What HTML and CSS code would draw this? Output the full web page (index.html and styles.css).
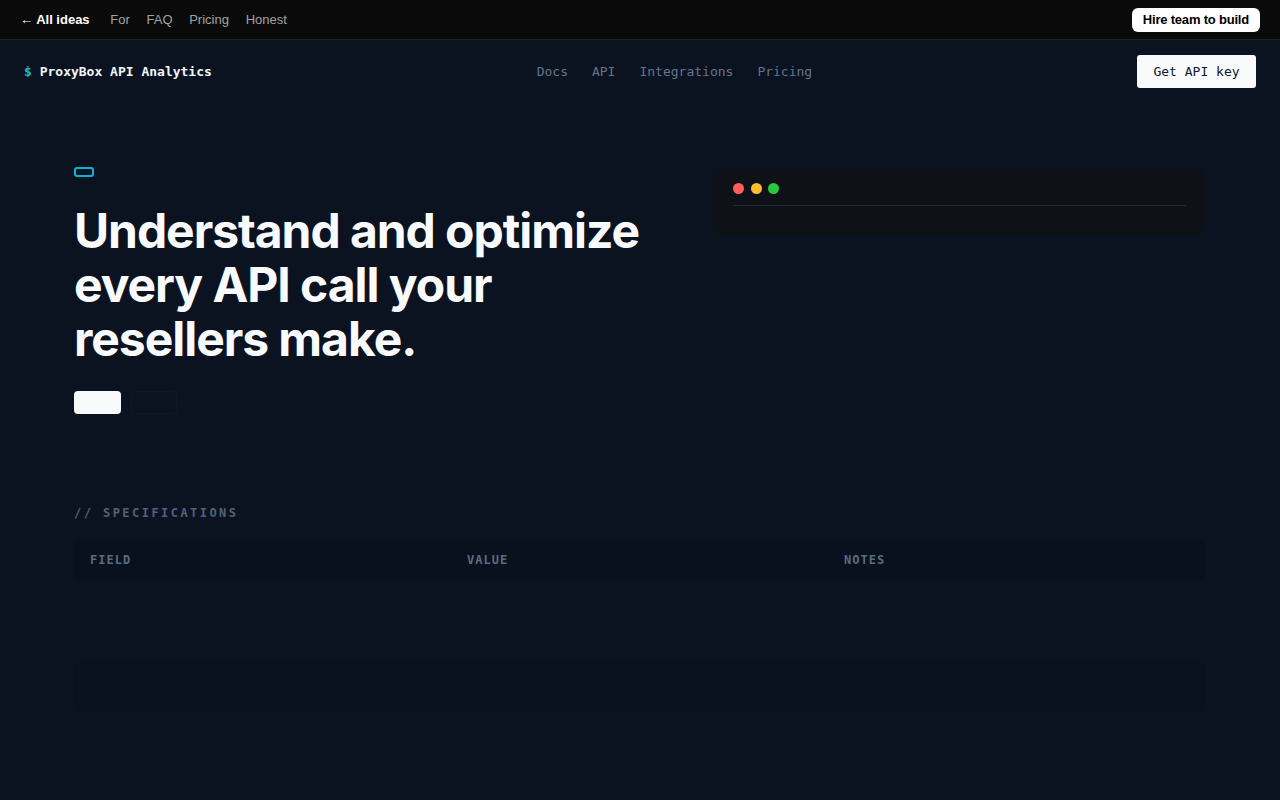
FILE: index.html
```html
<!DOCTYPE html>
<html lang="en">
<head>
  <meta charset="UTF-8">
  <meta name="viewport" content="width=device-width, initial-scale=1.0">
  <title>ProxyBox API Analytics</title>
  <link rel="stylesheet" href="styles.css">
</head>
<body>
  <!-- верхня панель -->
  <div class="topbar">
    <div class="topbar-left">
      <a class="back" href="#">&larr; All ideas</a>
      <a href="#">For</a>
      <a href="#">FAQ</a>
      <a href="#">Pricing</a>
      <a href="#">Honest</a>
    </div>
    <a class="hire" href="#">Hire team to build</a>
  </div>

  <!-- навігація -->
  <nav class="nav">
    <div class="logo"><span class="dollar">$</span> ProxyBox API Analytics</div>
    <div class="nav-links">
      <a href="#">Docs</a>
      <a href="#">API</a>
      <a href="#">Integrations</a>
      <a href="#">Pricing</a>
    </div>
    <a class="key-btn" href="#">Get API key</a>
  </nav>

  <main class="page">
    <section class="hero">
      <div class="hero-text">
        <span class="badge"></span>
        <h1>Understand and optimize every API call your resellers make.</h1>
        <div class="actions">
          <a class="btn-primary" href="#"></a>
          <a class="btn-ghost" href="#"></a>
        </div>
      </div>
      <div class="terminal">
        <div class="term-head">
          <span class="dot red"></span>
          <span class="dot yellow"></span>
          <span class="dot green"></span>
        </div>
      </div>
    </section>

    <section class="specs">
      <div class="specs-label">// SPECIFICATIONS</div>
      <div class="table">
        <div class="table-head">
          <div>FIELD</div>
          <div>VALUE</div>
          <div>NOTES</div>
        </div>
      </div>
      <div class="panel"></div>
    </section>
  </main>
</body>
</html>
```

FILE: styles.css
```css
/* Загальні стилі */
html, body {
  margin: 0;
  padding: 0;
  background: #0b1321;
  color: #f8fafc;
}

a {
  text-decoration: none;
}

/* Верхня панель */
.topbar {
  height: 40px;
  box-sizing: border-box;
  background: #0a0a0a;
  border-bottom: 1px solid #222;
  display: flex;
  align-items: center;
  justify-content: space-between;
  padding: 0 20px;
  font-family: "Liberation Sans", Arial, sans-serif;
  font-size: 13px;
}

.topbar-left {
  display: flex;
  align-items: center;
  gap: 16.7px;
}

.topbar-left a {
  color: #a3a3a3;
}

.topbar-left .back {
  color: #fff;
  font-weight: bold;
  margin-right: 4px;
}

.hire {
  background: #fff;
  color: #000;
  font-weight: bold;
  padding: 5px 11px;
  border-radius: 6px;
  line-height: 14px;
  letter-spacing: -0.2px;
}

/* Навігація */
.nav {
  height: 63px;
  display: flex;
  align-items: center;
  justify-content: space-between;
  padding: 0 24px;
  font-family: "DejaVu Sans Mono", monospace;
  font-size: 13px;
}

.logo {
  font-weight: bold;
  color: #f1f5f9;
}

.dollar {
  color: #22b8cf;
}

.nav-links {
  display: flex;
  gap: 24px;
}

.nav-links a {
  color: #64748b;
}

.key-btn {
  background: #f8fafc;
  color: #0f172a;
  padding: 9px 16px;
  border-radius: 3px;
  line-height: 15px;
  width: 87px;
  text-align: center;
}

/* Основна частина */
.page {
  margin: 0 75px 0 74px;
  padding-top: 64px;
}

.hero {
  display: flex;
  justify-content: space-between;
  align-items: flex-start;
}

.hero-text {
  width: 580px;
}

.badge {
  display: block;
  width: 16px;
  height: 6px;
  border: 2px solid #06b6d4;
  border-radius: 3px;
}

h1 {
  font-family: Inter, "Liberation Sans", sans-serif;
  font-size: 48px;
  font-weight: 700;
  line-height: 54px;
  letter-spacing: -1.05px;
  margin: 27px 0 25px;
}

.actions {
  display: flex;
  gap: 10px;
}

.btn-primary {
  width: 47px;
  height: 23px;
  background: #f8fafc;
  border-radius: 4px;
}

.btn-ghost {
  width: 44px;
  height: 21px;
  border: 1px solid #0f1826;
  border-radius: 4px;
}

.terminal {
  width: 492px;
  height: 69px;
  background: #0e1118;
  border-radius: 6px;
  box-sizing: border-box;
  padding: 16px 19px 0 20px;
}

.term-head {
  display: flex;
  gap: 6.5px;
  padding-bottom: 11px;
  border-bottom: 1px solid #262a31;
}

.dot {
  width: 11px;
  height: 11px;
  border-radius: 50%;
}

.red { background: #ff5f56; }
.yellow { background: #ffbd2e; }
.green { background: #27c93f; }

/* Специфікації */
.specs {
  padding-top: 92px;
}

.specs-label {
  font-family: "DejaVu Sans Mono", monospace;
  font-size: 12px;
  font-weight: bold;
  letter-spacing: 2.45px;
  color: #536178;
}

.table {
  margin-top: 20px;
  background: #0a111e;
  border-radius: 4px;
}

.table-head {
  display: grid;
  grid-template-columns: 1fr 1fr 1fr;
  height: 40px;
  align-items: center;
  font-family: "DejaVu Sans Mono", monospace;
  font-size: 12px;
  font-weight: bold;
  letter-spacing: 1px;
  color: #5b6b82;
}

.table-head div {
  padding: 0 16px;
}

.panel {
  margin-top: 81px;
  height: 49px;
  background: #0a1220;
  border: 1px solid #0a111d;
  border-radius: 6px;
}
```
